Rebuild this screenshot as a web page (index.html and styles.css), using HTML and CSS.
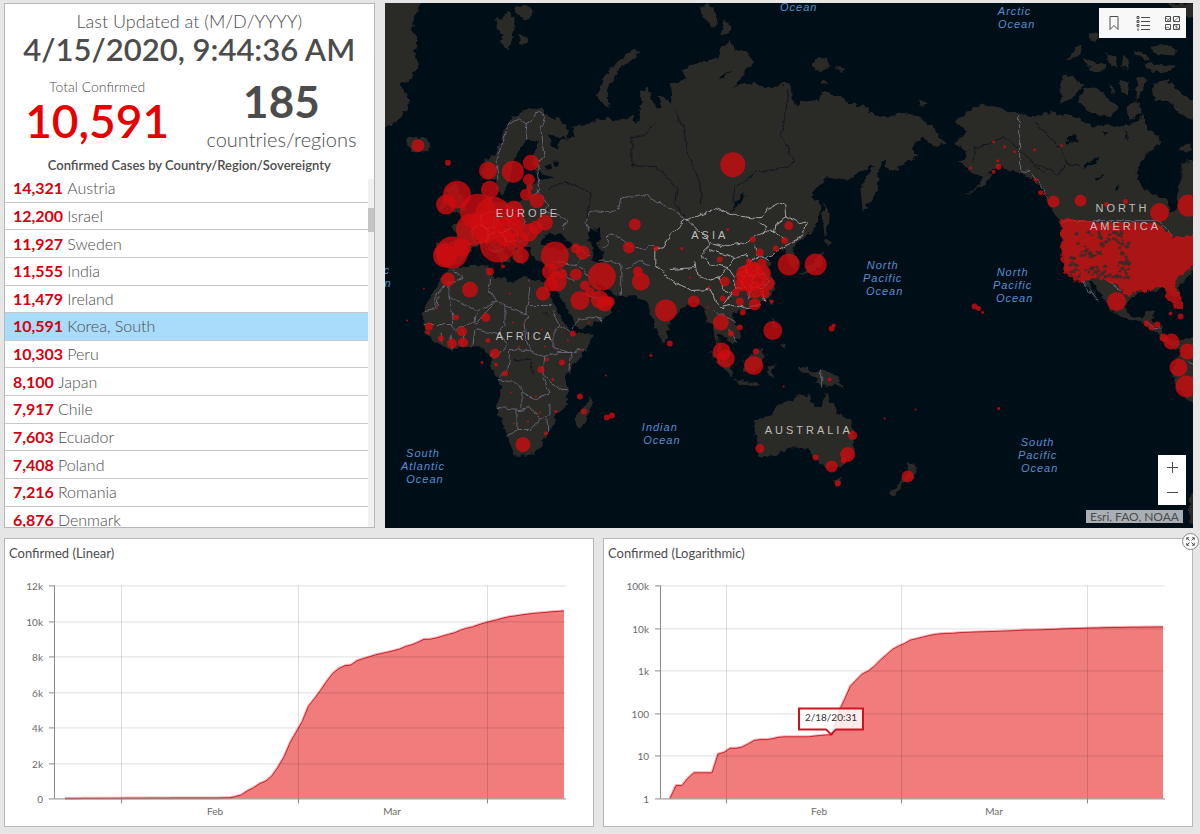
FILE: index.html
```html
<!DOCTYPE html>
<html lang="en">
<head>
<meta charset="utf-8">
<title>Confirmed cases dashboard</title>
<link rel="stylesheet" href="styles.css">
</head>
<body>
<main class="dashboard">
  <div class="row row-top">
    <section class="panel summary">
      <header class="updated">
        <p class="updated-label">Last Updated at (M/D/YYYY)</p>
        <p class="updated-time">4/15/2020, 9:44:36 AM</p>
      </header>
      <div class="totals">
        <div class="total">
          <p class="total-label">Total Confirmed</p>
          <p class="total-value">10,591</p>
        </div>
        <div class="regions">
          <p class="regions-value">185</p>
          <p class="regions-label">countries/regions</p>
        </div>
      </div>
      <h2 class="list-title">Confirmed Cases by Country/Region/Sovereignty</h2>
      <div class="list-wrap">
        <ul class="list">
          <li class="item"><b>14,321</b> Austria</li>
          <li class="item"><b>12,200</b> Israel</li>
          <li class="item"><b>11,927</b> Sweden</li>
          <li class="item"><b>11,555</b> India</li>
          <li class="item"><b>11,479</b> Ireland</li>
          <li class="item selected"><b>10,591</b> Korea, South</li>
          <li class="item"><b>10,303</b> Peru</li>
          <li class="item"><b>8,100</b> Japan</li>
          <li class="item"><b>7,917</b> Chile</li>
          <li class="item"><b>7,603</b> Ecuador</li>
          <li class="item"><b>7,408</b> Poland</li>
          <li class="item"><b>7,216</b> Romania</li>
          <li class="item"><b>6,876</b> Denmark</li>
        </ul>
        <div class="track"><div class="thumb"></div></div>
      </div>
    </section>

    <section class="map">
      <svg class="map-svg" viewBox="385 3 809 526" preserveAspectRatio="xMidYMid slice" role="img" aria-label="World map of confirmed cases">
        <defs>
          <filter id="coast" x="0" y="0" width="100%" height="100%">
            <feTurbulence type="fractalNoise" baseFrequency="0.16" numOctaves="2" seed="4" result="n"/>
            <feDisplacementMap in="SourceGraphic" in2="n" scale="7" xChannelSelector="R" yChannelSelector="G"/>
          </filter>
          <filter id="wiggle" x="0" y="0" width="100%" height="100%">
            <feTurbulence type="fractalNoise" baseFrequency="0.12" numOctaves="2" seed="9" result="n"/>
            <feDisplacementMap in="SourceGraphic" in2="n" scale="6" xChannelSelector="R" yChannelSelector="G"/>
          </filter>
        </defs>
        <g class="land" filter="url(#coast)">
          <path d="M380 0L421 0 417 13 411 30 418 40 413 50 419 66 409 80 400 86 411 100 403 116 392 125 380 127Z"/>
          <path d="M406 141L410 138 426 138 430 143 427 149 420 153 412 152Z"/>
          <path d="M495 18L503 20 507 11 512 15 516 26 513 35 509 51 504 46 499 40 502 34 497 28ZM514 9L524 5 534 10 531 17 525 20 518 15ZM521 35L527 38 525 44 520 43Z"/>
          <path d="M641 51L634 50 624 57 613 65 606 75 602 85 597 97 604 106 611 108 607 100 609 88 615 77 621 68 632 60Z"/>
          <path d="M699 7L710 4 717 15 718 25 711 26 703 17ZM719 36L725 20 732 29 728 34ZM813 65L817 58 826 60 832 66 822 71 817 71ZM835 67L847 69 842 72ZM822 82L826 80 829 84 824 85ZM919 102L926 100 929 105 921 106Z"/>
          <path d="M485 160L494 155 500 143 507 127 512 118 522 112 533 108 543 109 546 116 560 120 569 131 567 138 555 137 548 134 552 145 558 150 559 142 566 139 575 137 572 128 580 125 590 124 602 118 618 121 632 117 637 124 640 110 642 90 649 88 652 100 658 110 662 108 657 94 668 100 672 104 670 85 685 80 683 72 693 65 718 58 723 48 730 42 735 50 748 53 753 63 735 87 747 83 765 87 778 88 782 83 791 85 792 100 798 107 802 102 820 100 823 92 843 97 848 103 868 107 870 114 890 117 902 113 917 115 930 125 942 137 945 143 935 147 923 138 913 147 918 157 905 163 895 172 885 167 885 160 881 163 879 173 878 190 863 212 861 190 868 175 875 165 858 173 850 180 835 178 827 177 810 197 820 202 821 213 812 233 798 242 793 248 800 262 796 270 788 262 785 250 777 250 772 256 762 258 772 263 767 270 776 283 771 297 755 307 740 311 733 315 735 325 742 335 733 345 726 338 718 335 719 345 727 357 729 367 720 358 716 340 714 325 708 322 705 312 698 303 690 303 680 312 669 322 668 337 663 343 657 332 652 318 647 303 637 297 623 297 608 291 598 283 602 296 608 300 615 303 610 315 592 325 578 330 573 320 565 305 556 292 553 285 550 272 552 266 540 263 532 258 531 248 523 245 521 255 524 264 515 262 508 248 502 243 496 243 505 253 510 262 503 263 493 250 485 243 475 247 468 255 462 262 450 266 436 263 436 243 452 243 458 235 450 227 460 222 475 215 485 208 490 195 494 203 505 203 520 203 528 198 527 185 540 180 555 178 540 174 533 165 535 150 540 140 528 139 523 145 515 158 512 170 508 182 503 195 497 190 495 180 488 178 483 172Z"/>
          <path d="M452 212L447 190 455 183 462 195 466 210 458 214ZM439 210L440 200 447 199 447 208Z"/>
          <path d="M440 283L445 273 452 268 465 267 488 265 492 277 502 278 516 283 518 278 530 279 545 283 549 292 556 308 563 322 573 335 595 334 585 353 572 367 565 378 568 392 568 405 555 415 555 425 548 433 542 445 532 455 515 457 512 449 507 435 497 408 502 388 497 378 491 368 491 357 482 348 472 347 450 350 435 342 424 330 423 315 427 302 435 290Z"/>
          <path d="M591 398L593 403 585 425 580 430 577 428 577 415 585 405Z"/>
          <path d="M708 351L722 360 733 372 733 378 727 374 717 361ZM733 380L745 381 762 384 755 386 738 383ZM743 362L752 355 763 348 764 355 762 365 755 374 745 372ZM768 367L777 366 771 371 775 378 769 376ZM773 317L777 330 772 326ZM780 345L786 343 785 349ZM798 367L807 368 812 373 822 370 835 375 845 390 835 383 828 388 822 385 812 376 802 372Z"/>
          <path d="M755 422L773 413 780 403 788 400 793 402 797 396 810 395 810 402 818 407 822 409 825 393 828 393 830 400 837 412 847 418 855 432 855 452 848 462 842 467 832 468 823 467 818 460 813 458 810 450 798 448 785 450 777 456 763 458 758 455 760 448 755 432Z"/>
          <path d="M834 479L842 480 839 487 836 485ZM907 460L917 468 912 478 905 483 895 495 888 495 902 482 909 474Z"/>
          <path d="M825 203L829 213 828 230 825 238 823 220ZM824 240L833 242 828 247ZM823 250L822 265 812 273 798 275 812 266ZM770 298L773 302 770 307Z"/>
          <path d="M957 123L962 115 980 105 998 108 1020 115 1035 118 1040 115 1053 112 1072 117 1085 120 1092 128 1105 125 1122 127 1135 123 1145 115 1148 130 1158 135 1162 143 1152 150 1142 160 1137 173 1142 187 1158 197 1168 200 1170 212 1178 210 1177 193 1182 180 1182 163 1198 160 1198 268 1183 282 1178 285 1182 298 1175 298 1165 288 1155 292 1142 292 1132 297 1125 308 1130 316 1143 319 1147 312 1155 310 1155 317 1152 323 1162 327 1163 335 1178 343 1198 336 1198 408 1185 398 1173 378 1175 365 1182 352 1170 347 1160 337 1142 322 1128 320 1112 312 1102 295 1093 282 1088 282 1099 303 1083 282 1068 272 1063 255 1062 230 1058 220 1048 203 1042 187 1025 175 1015 172 1005 170 1000 165 992 173 985 185 962 198 980 185 983 177 972 173 960 163 968 152 955 143 967 133Z"/>
          <path d="M1063 77L1072 75 1085 85 1072 100 1062 102 1060 90ZM1078 100L1085 90 1098 88 1108 97 1118 107 1112 117 1092 115 1085 107ZM1120 80L1130 83 1128 97 1121 90ZM1138 78L1147 80 1142 93 1137 100ZM1153 83L1168 80 1182 93 1198 103 1198 124 1182 115 1172 103 1155 100ZM1152 48L1165 45 1178 50 1174 56 1155 54ZM1143 63L1160 64 1175 65 1172 73 1152 72ZM1067 60L1077 48 1083 45 1080 57 1070 60ZM1083 57L1098 63 1108 67 1098 73 1087 66ZM1135 50L1146 54 1150 60 1138 57ZM1090 32L1099 35 1098 42 1091 41ZM1168 4L1198 4 1198 18 1182 14ZM1108 53L1116 58 1118 68 1108 62ZM1124 55L1130 60 1128 70 1122 66ZM1110 83L1116 92 1111 94ZM1127 105L1140 103 1142 114 1130 120ZM1180 146L1192 143 1192 151 1180 152Z"/>
          <path d="M1190 495L1198 490 1198 530 1191 522Z"/>
        </g>
        <g class="water" filter="url(#coast)">
          <path d="M542 240L548 232 556 235 562 234 568 241 575 247 562 250 550 249 542 246Z"/>
          <path d="M590 231L600 229 602 237 597 243 603 255 602 264 594 262 593 250 588 240Z"/>
          <path d="M743 193L746 196 738 206 730 212 735 205ZM720 76L732 71 725 76 721 81ZM545 165L552 164 549 172ZM553 162L558 162 557 168Z"/>
          <path d="M1066 138L1078 134 1078 141 1068 145ZM1082 166L1100 158 1096 164 1086 168ZM1096 178L1106 175 1098 181ZM1116 190L1120 183 1118 191ZM1125 127L1130 142 1126 136ZM1100 130L1110 133 1104 136Z"/>
        </g>
        <g class="rivers" filter="url(#wiggle)">
          <path d="M632 166L632 137 645 135 655 124M632 166L655 167 668 178 677 190 675 202 685 218M550 190L565 182 580 188 590 193 590 205 585 222M677 110L684 130 688 155 700 183 702 205M788 90L786 115 781 135 790 150 795 163 780 170 755 172 735 190 733 203M512 212L525 218"/>
          <path d="M973 165L975 148 990 145 1005 136 1015 145 1030 160 1045 175M1035 122L1050 138 1062 150 1066 165 1058 176 1030 160M1066 163L1080 167"/>
          <path d="M515 360L530 361 533 375M543 312L550 318"/>
        </g>
        <g class="borders" filter="url(#wiggle)">
          <path d="M498 180L496 160 504 140 508 125 520 119 526 123 532 120 538 112 545 116 541 130 545 155 537 170 540 190 533 195M526 123L528 140M537 190L548 205 545 212 560 216 567 222 563 229M505 205L520 212 525 225 515 232M475 218L485 228 495 222 505 228 518 224M463 243L475 246M490 240L502 236 512 242M512 242L523 240 530 232M448 247L447 262M585 222L590 212 605 213 620 208 622 198 643 195 655 200 668 208 687 220M585 222L590 231M602 247L608 245 609 235 620 238 630 246 645 250 650 246 660 248M573 246L582 250 590 256M552 262L575 266 582 258M600 262L612 260 622 265 622 280 620 297M625 270L640 262 650 266M578 266L590 278M562 272L575 282"/>
          <path d="M447 284L435 298 435 310M452 268L462 279 449 283 449 297 477 312 496 302 489 290 491 278M449 297L453 325 424 325M477 312L475 322 457 330 452 325M496 302L505 306 527 316 529 280M529 306L552 306M529 316L524 323 526 340 531 350M505 306L505 325 499 335 475 330M552 310L560 325 573 335M560 325L553 335 553 348 570 353 585 350M475 330L473 346M463 332L462 348M450 335L452 350M440 333L442 345M510 350L530 351 544 356 560 353 572 353 570 370M499 335L508 345 495 360M510 350L508 370 500 378M497 380L515 383 522 390 522 408M497 408L520 410 530 408M517 410L517 430 508 438M517 430L530 430 540 420 530 408M545 355L543 375 560 390 569 390M522 393L535 400 550 393 543 378M540 420L550 415 550 405M548 433L547 420M488 355L495 355M496 302L475 325M425 310L437 308 438 298"/>
          <path d="M573 330L578 320 598 316 602 322M580 295L605 300"/>
          <path d="M1020 115L1020 171 1030 172 1040 184 1048 198M1145 322L1160 330M1190 362L1196 367M1108 281L1118 288 1122 292M1083 282L1099 303M714 312L722 315 735 322M728 330L738 342"/>
          <path class="straight" d="M1064 221L1158 221 1174 237M822 370L822 387"/>
        </g>
        <g class="china" filter="url(#wiggle)">
          <path d="M687 220L705 214 716 209 735 216 760 219 763 215 768 208 778 203 786 206 787 217 800 224 808 222 803 235 798 240 786 246 778 252 766 258M687 220L680 226 670 235 663 248 655 250 655 265 665 275 674 283 692 291 710 290 716 302 722 308 735 305 748 309 760 306"/>
          <path d="M710 243L728 247 745 244 765 232 768 228 760 222M687 220L708 240 710 246 700 256 710 264 728 268 735 258 725 255 710 250M695 262L697 275 710 280 720 277 728 268 735 278 745 272 760 270M735 258L745 255 750 262 745 272M750 262L762 256 770 262M760 270L770 280 762 290 750 285 735 290 735 278M762 290L765 302M750 285L748 300M722 290L733 293 722 308M765 232L775 233 785 240M787 217L776 225 775 233M670 270L695 268M755 245L757 256M718 277L722 290"/>
        </g>
        <g id="bubbles" class="bubbles"></g>
        <g class="oceans">
          <text x="799" y="11">Ocean</text>
          <text x="1015" y="15">Arctic</text><text x="1017" y="28">Ocean</text>
          <text x="368" y="274">Atlantic</text><text x="373" y="287">Ocean</text>
          <text x="883" y="269">North</text><text x="883" y="282">Pacific</text><text x="885" y="295">Ocean</text>
          <text x="1013" y="276">North</text><text x="1013" y="289">Pacific</text><text x="1015" y="302">Ocean</text>
          <text x="660" y="432">Indian</text><text x="662" y="445">Ocean</text>
          <text x="423" y="458">South</text><text x="423" y="471">Atlantic</text><text x="425" y="484">Ocean</text>
          <text x="1038" y="447">South</text><text x="1038" y="460">Pacific</text><text x="1040" y="473">Ocean</text>
        </g>
        <g class="continents">
          <text x="528" y="217">EUROPE</text>
          <text x="710" y="239">ASIA</text>
          <text x="525" y="340">AFRICA</text>
          <text x="809" y="435">AUSTRALIA</text>
          <text x="1123" y="212">NORTH</text>
          <text x="1126" y="230">AMERICA</text>
        </g>
      </svg>
      <div class="toolbar">
        <button type="button" class="tool" aria-label="Bookmarks">
          <svg width="18" height="18" viewBox="0 0 18 18"><path d="M5 2.500h8v13l-4-4-4 4z"/></svg>
        </button>
        <button type="button" class="tool" aria-label="Legend">
          <svg width="18" height="18" viewBox="0 0 18 18"><path d="M7 3.500h9M7 7.500h9M7 11.500h9M7 15.500h9"/><path d="M3 2.500h2v2H3zM3 6.500h2v2H3zM3 10.500h2v2H3zM4 14v3"/></svg>
        </button>
        <button type="button" class="tool" aria-label="Basemap gallery">
          <svg width="18" height="18" viewBox="0 0 18 18"><path d="M2.500 2.500h5v5h-5zM10.500 2.500h6v5h-6zM2.500 10.500h5v5h-5zM10.500 10.500h6v5h-6z"/><path class="fine" d="M3 4l4 3M4 7l3-3M11 7l5-4M3 14l2-1 2 2M11 11l5 4M13 15l1-4"/></svg>
        </button>
      </div>
      <div class="zoom">
        <button type="button" class="zoom-btn" aria-label="Zoom in"><svg width="13" height="13" viewBox="0 0 13 13"><path d="M6.500 1v11M1 6.500h11"/></svg></button>
        <button type="button" class="zoom-btn" aria-label="Zoom out"><svg width="13" height="13" viewBox="0 0 13 13"><path d="M1 6.500h11"/></svg></button>
      </div>
      <p class="credit">Esri, FAO, NOAA</p>
    </section>
  </div>

  <div class="row row-bottom">
    <section class="panel chart-panel">
      <h2 class="chart-title">Confirmed (Linear)</h2>
      <svg id="linear" class="chart" viewBox="0 0 588 254" role="img" aria-label="Confirmed cases, linear scale"></svg>
    </section>
    <section class="panel chart-panel">
      <h2 class="chart-title">Confirmed (Logarithmic)</h2>
      <svg id="log" class="chart" viewBox="0 0 588 254" role="img" aria-label="Confirmed cases, logarithmic scale"></svg>
      <button type="button" class="expand" aria-label="Expand">
        <svg width="15" height="15" viewBox="0 0 16 16"><path d="M4 6.500V4h2.500M4 4l3 3M9.500 4H12v2.500M12 4L9 7M4 9.500V12h2.500M4 12l3-3M12 9.500V12H9.500M12 12L9 9"/></svg>
      </button>
    </section>
  </div>
</main>
<script src="app.js"></script>
</body>
</html>
```
FILE: styles.css
```css
* { box-sizing: border-box; }
body {
  margin: 0;
  background: #e6e6e6;
  color: #4c4c4c;
  font-family: Lato, "Open Sans", sans-serif;
}
p, h2, ul { margin: 0; padding: 0; font-weight: 400; }
button { padding: 0; border: 0; background: none; cursor: pointer; }
button svg { display: block; fill: none; stroke: #4c4c4c; stroke-width: 1; }

.dashboard {
  display: grid;
  grid-template-rows: 20fr 11fr;
  gap: 10px;
  height: 100vh;
  padding: 3px 7px 7px 4px;
}
.row { display: grid; min-height: 0; }
.row-top { grid-template-columns: 11fr 24fr; gap: 10px; }
.row-bottom { grid-template-columns: 1fr 1fr; gap: 9px; }
.panel { background: #fff; border: 1px solid #b4b9bd; min-width: 0; min-height: 0; }

.summary { display: flex; flex-direction: column; text-align: center; overflow: hidden; }
.updated { padding-top: 5px; }
.updated-label { font-size: 18px; line-height: 24px; font-weight: 300; }
.updated-time { font-size: 31px; line-height: 32px; font-weight: 600; white-space: nowrap; }
.totals { display: grid; grid-template-columns: 1fr 1fr; padding-top: 12px; }
.total-label { font-size: 14px; line-height: 20px; font-weight: 300; }
.total-value { font-size: 46px; line-height: 48px; font-weight: 600; color: #e60000; }
.regions-value { font-size: 44px; line-height: 48px; font-weight: 700; }
.regions-label { font-size: 20px; line-height: 28px; font-weight: 300; }
.list-title { font-size: 13px; line-height: 20px; font-weight: 600; padding: 2px 0 4px; }

.list-wrap { display: flex; flex: 1; min-height: 0; overflow: hidden; }
.list {
  flex: 1;
  display: grid;
  grid-auto-rows: 1fr;
  height: calc(100% + 11px);
  margin-top: -4px;
  list-style: none;
  text-align: left;
}
.item {
  display: flex;
  align-items: center;
  gap: 4px;
  padding-left: 8px;
  border-bottom: 1px solid #c8c8c8;
  font-size: 16px;
  font-weight: 300;
  line-height: 20px;
}
.item b { font-weight: 700; color: #d6000f; }
.selected { background: #a9dbfb; }
.track { width: 6px; background: #f0f0f0; }
.thumb { height: 24px; margin-top: 29px; background: #c4c4c4; }

.map { position: relative; background: #000e18; min-width: 0; min-height: 0; overflow: hidden; }
.map-svg { display: block; width: 100%; height: 100%; }
.land { fill: #2b2a28; }
.water { fill: #000e18; }
.rivers { fill: none; stroke: #10141f; stroke-width: 1; }
.borders { fill: none; stroke: #77708a; stroke-width: 0.8; }
.china { fill: none; stroke: #c4c2c6; stroke-width: 0.8; }
.bubbles { fill: #d00b10; fill-opacity: 0.78; }
.bubbles .gap { fill: #3b2b27; fill-opacity: 0.9; }
.bubbles .edge { fill: none; stroke: #e04038; stroke-opacity: 0.4; stroke-width: 0.7; }
.oceans, .continents { font-family: "Liberation Sans", Arial, sans-serif; text-anchor: middle; }
.oceans { font-size: 11px; font-style: italic; letter-spacing: 1px; fill: #5a8fd0; }
.continents { font-size: 11px; letter-spacing: 3px; fill: #c0bfbd; }

.toolbar { position: absolute; top: 5px; right: 7px; display: flex; height: 30px; background: #f8f8f8; }
.tool { display: grid; place-items: center; width: 29px; }
.tool .fine { stroke-width: 0.7; }
.zoom { position: absolute; right: 7px; bottom: 23px; width: 28px; background: #fff; }
.zoom-btn { display: grid; place-items: center; width: 28px; height: 25px; }
.credit {
  position: absolute;
  right: 10px;
  bottom: 5px;
  padding: 0 4px;
  background: #a9afb5;
  font-size: 12px;
  line-height: 13px;
}

.chart-panel { position: relative; display: flex; flex-direction: column; }
.chart-title { padding: 4px; font-size: 13px; line-height: 20px; }
.chart { flex: 1; min-height: 0; width: 100%; margin-top: 4px; }
.chart text { font-size: 10px; fill: #6a6a6a; }
.grid-line { stroke: #000; stroke-opacity: 0.13; }
.axis { stroke: #8a8a8a; }
.area { fill: #f07c7c; }
.halo { fill: none; stroke: #f7b5b5; stroke-width: 3; }
.line { fill: none; stroke: #c8202c; stroke-width: 1; }
.tip { fill: #fff; fill-opacity: 0.85; stroke: #cc1420; stroke-width: 2; }
.chart .tip-text { fill: #333; text-anchor: middle; }
.y-label { text-anchor: end; }
.x-label { text-anchor: middle; }
.expand {
  position: absolute;
  top: -6px;
  right: -7px;
  display: grid;
  place-items: center;
  width: 17px;
  height: 17px;
  border: 1px solid #8a8a8a;
  border-radius: 50%;
  background: #fff;
}
```
FILE: app.js
```js
const NS = 'http://www.w3.org/2000/svg';

function add(parent, name, attrs, text) {
  const el = document.createElementNS(NS, name);
  for (const key in attrs) el.setAttribute(key, attrs[key]);
  if (text !== undefined) el.textContent = text;
  parent.appendChild(el);
  return el;
}

/* Map bubbles: x, y, radius */
const cases = [
  [418,146,6.5],[448,163,3],[488,171,9],[513,172,11],[531,163,8],[529,180,6],[526,195,6],[537,201,7.5],
  [490,190,9],[457,195,14],[446,205,10],[530,188,3],[478,212,18],[493,215,18],[472,230,16],[486,228,15],
  [498,245,18],[510,228,12],[514,210,9],[452,253,16],[445,256,12],[462,248,9],[521,256,8],[529,233,9],
  [536,228,7],[545,223,8],[520,240,9],[555,256,14],[576,249,5],[583,253,7],[516,222,9],[505,238,9],
  [635,225,6],[629,248,6],[733,165,12.5],[602,277,14],[580,301,9.5],[600,300,9],[605,304,8],[576,275,6],
  [585,286,5],[557,282,10],[550,272,8],[543,294,7],[551,285,7],[562,274,5],[590,293,5],[610,302,5],
  [641,282,9],[638,272,5],[448,280,7],[470,290,8],[490,272,4],[503,267,2],[666,311,11],[670,344,3],
  [486,318,4.5],[456,318,3],[429,327,4],[441,339,3],[452,344,5],[463,343,5],[462,332,5],[428,333,2],
  [488,341,2.5],[495,354,5],[505,374,3],[496,365,2],[541,370,3.5],[562,363,3],[573,334,3],[547,360,2],
  [523,445,7.5],[546,434,2],[580,397,3],[584,412,3],[607,418,3],[612,416,3],[606,376,1],[651,356,1.5],
  [424,289,1],[407,321,1],[437,309,1],[510,294,1],[513,323,1],[519,347,1],[545,347,1],[568,341,1],
  [553,380,1.5],[511,393,1],[528,422,1],[540,413,1],[514,424,1],[556,412,1.5],[482,363,1.5],[542,330,1],
  [589,323,1],[581,351,1],[536,397,1],
  [694,302,6],[721,323,8],[740,328,3],[731,334,3],[722,352,9],[726,359,9],[754,366,9.5],[756,352,3],
  [773,331,9.5],[789,265,11],[816,265,11],[789,226,4.5],[785,241,3.5],[776,249,3],[753,240,3],[760,253,4],
  [762,264,5],[749,262,3],[720,260,3],[682,249,1.5],[728,230,1.5],[656,249,2.5],[725,282,5],[723,299,3],
  [736,293,4],[740,302,4],[743,313,3],[755,305,6],[765,294,5],[751,278,14],[745,275,9],[755,290,9],
  [764,273,7],[768,284,7],[742,285,7],[753,271,9],[690,278,1],[709,288,1.5],[708,308,1],[772,302,2],
  [760,449,4.5],[832,467,6],[848,455,7.5],[853,436,4.5],[816,458,3],[844,461,3],[838,484,3],
  [908,477,6],[832,329,3],[834,326,2],[830,380,2],[784,387,1],[885,419,1],[916,410,1],[999,409,1.5],
  [975,307,3],[979,309,2.5],[983,313,1.5],[994,142,1.5],[1005,147,1.5],[1015,152,1.5],[1035,150,1.5],
  [971,168,1.5],[999,167,3],[994,172,2],[998,161,1.5],[1062,146,1.5],[1036,180,2],[1041,193,2.5],[1045,194,1.5],
  [1054,202,6],[1081,201,6],[1107,205,2.5],[1126,202,2.5],[1160,213,9.5],[1189,206,11],
  [1117,302,9.5],[1147,324,3],[1152,328,3],[1158,325,3],[1164,338,4],[1172,342,8],[1188,352,8],
  [1179,368,9],[1187,387,11],[1171,314,2],[1181,317,3]
];
const bubbles = document.getElementById('bubbles');
add(bubbles, 'path', {
  filter: 'url(#coast)',
  d: 'M1061 221Q1068 215 1076 221L1125 223 1158 223 1166 232 1173 238 1200 235 1200 262 1186 272 1176 282Q1174 288 1180 292L1184 306Q1184 312 1176 308L1167 300 1164 288 1155 288Q1148 296 1140 291L1130 296 1124 296 1120 286 1104 280 1094 279 1084 282Q1072 284 1066 272L1062 262 1061 236Z'
});
cases.forEach(([cx, cy, r]) => add(bubbles, 'circle', { cx, cy, r }));

/* Uncovered counties between the western state bubbles */
const states = [[1084,241,6],[1093,246,7],[1111,252,9],[1074,252,7],[1085,263,7],[1071,240,7],[1100,262,6],[1105,234,5],[1112,270,6]];
let seed = 11;
const rand = () => (seed = (seed * 16807) % 2147483647) / 2147483647;
for (let i = 0; i < 240; i++) {
  const x = 1067 + rand() * 60;
  const y = 233 + rand() * 46;
  const s = 1 + rand() * 2;
  if (states.some(([cx, cy, r]) => Math.hypot(x + s - cx, y - cy) < r)) continue;
  add(bubbles, 'path', { class: 'gap', d: `M${x} ${y}l${s} ${-s} ${s} ${s / 2} ${-s / 2} ${s}z` });
}
[[752,270,6],[748,282,6],[760,280,6],[756,292,5],[743,272,5],[490,220,9],[480,235,9],[502,225,8],[496,242,10],[511,236,7]]
  .forEach(([cx, cy, r]) => add(bubbles, 'circle', { class: 'edge', filter: 'url(#wiggle)', cx, cy, r }));

/* Daily confirmed totals from January 22 */
const series = [1,1,2,2,3,4,4,4,4,11,12,15,15,16,19,23,24,24,25,27,28,28,28,28,28,29,30,31,31,104,204,433,602,833,
  977,1261,1766,2337,3150,3736,4335,5186,5621,6088,6593,7041,7314,7478,7513,7755,7869,7979,8086,8162,8236,8320,8413,
  8565,8652,8799,8961,8961,9037,9137,9241,9332,9478,9583,9661,9786,9887,9976,10062,10156,10237,10284,10331,10384,
  10423,10450,10480,10512,10537,10564];
const TOP = 14;
const BASE = 227;

function drawChart(id, opt) {
  const svg = document.getElementById(id);
  const step = (opt.end - opt.start) / (series.length - 2);
  const points = series.slice(1).map((v, i) => [opt.start + i * step, BASE - (BASE - TOP) * opt.scale(v)]);
  const line = 'M' + points.map(p => p.map(n => n.toFixed(1)).join(' ')).join('L');
  add(svg, 'path', { class: 'halo', d: line });
  add(svg, 'path', { class: 'area', d: `${line}V${BASE}H${opt.start}Z` });
  add(svg, 'path', { class: 'line', d: line });
  opt.yLabels.forEach((label, i) => {
    const y = Math.round(BASE - (BASE - TOP) * i / (opt.yLabels.length - 1)) + 0.5;
    add(svg, 'path', { class: i ? 'grid-line' : 'axis', d: `M${opt.left} ${y}H561` });
    add(svg, 'path', { class: 'axis', d: `M${opt.left - 5} ${y}H${opt.left}` });
    add(svg, 'text', { class: 'y-label', x: opt.left - 11, y: y + 4 }, label);
  });
  add(svg, 'path', { class: 'axis', d: `M${opt.left + 0.5} ${TOP}V${BASE}` });
  opt.ticks.forEach(x => {
    add(svg, 'path', { class: 'grid-line', d: `M${x + 0.5} ${TOP}V${BASE}` });
    add(svg, 'path', { class: 'axis', d: `M${x + 0.5} ${BASE}v5` });
  });
  add(svg, 'text', { class: 'x-label', x: opt.labels[0], y: 244 }, 'Feb');
  add(svg, 'text', { class: 'x-label', x: opt.labels[1], y: 244 }, 'Mar');
  return svg;
}

drawChart('linear', {
  left: 49, start: 60, end: 559, ticks: [116, 293, 482], labels: [210, 387],
  yLabels: ['0', '2k', '4k', '6k', '8k', '10k', '12k'],
  scale: v => v / 12000
});
const log = drawChart('log', {
  left: 56, start: 66, end: 559, ticks: [122, 297, 483], labels: [215, 390],
  yLabels: ['1', '10', '100', '1k', '10k', '100k'],
  scale: v => Math.log10(v) / 5
});
add(log, 'path', { class: 'tip', d: 'M195 137H259V158H232L227 163 222 158H195Z' });
add(log, 'text', { class: 'tip-text', x: 227, y: 150 }, '2/18/20:31');
```
